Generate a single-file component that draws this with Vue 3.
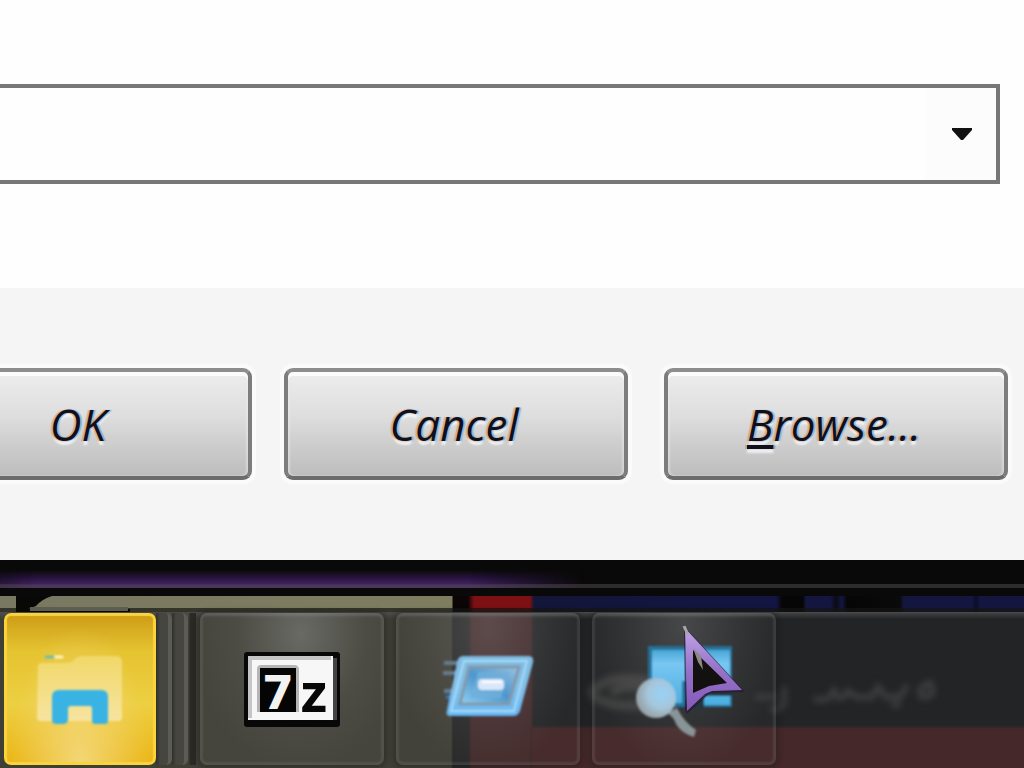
<template>
  <main class="screen">
    <section class="run-dialog">
      <div class="run-dialog__body">
        <div class="run-dialog__combo">
          <select v-model="command" class="run-dialog__select" aria-label="Open">
            <option value=""></option>
          </select>
          <svg class="run-dialog__arrow" viewBox="0 0 20 12" aria-hidden="true">
            <path d="M0 0H20V2L11 12H9L0 2Z" fill="#111" />
          </svg>
        </div>
      </div>

      <footer class="run-dialog__footer">
        <button
          v-for="action in actions"
          :key="action.key"
          class="run-dialog__button"
          type="button"
        >
          <span class="run-dialog__caption"><u v-if="action.accessKey">{{ action.accessKey }}</u>{{ action.label }}</span>
        </button>
      </footer>
    </section>

    <div class="desktop-edge">
      <div class="desktop-edge__glow"></div>
    </div>
    <div class="desktop-strip">
      <svg class="desktop-strip__notch" viewBox="0 0 116 16" aria-hidden="true">
        <path d="M0 0H36Q26 3 20 10L12 13H114V16H0Z" fill="#080807" />
        <path d="M14 11H112V15H14Z" fill="#5f5d50" />
      </svg>
    </div>

    <nav class="taskbar" aria-label="Taskbar">
      <!-- 任务栏玻璃后面透出来的模糊文字，只是装饰 -->
      <svg class="taskbar__ghost" viewBox="0 0 370 70" aria-hidden="true">
        <g fill="none" stroke="#65655f" stroke-width="6" stroke-linecap="round">
          <path d="M16 36Q34 18 72 26M18 42Q42 56 78 48M38 36Q54 28 70 34" stroke-width="9" opacity="0.4" />
          <path d="M182 42H198M208 34V48Q204 56 196 54" opacity="0.35" />
          <path d="M240 44Q252 48 258 36Q264 50 272 36L280 42H296L302 32L310 42H324L330 32M318 50H322M346 42Q340 32 354 28Q362 42 346 42" opacity="0.4" />
        </g>
      </svg>

      <button class="task task--explorer" type="button" aria-label="File Explorer">
        <svg class="task__icon task__icon--folder" viewBox="0 0 152 152" aria-hidden="true">
          <defs>
            <linearGradient id="folder-fill" x1="0" y1="0" x2="0" y2="1">
              <stop offset="0" stop-color="#f1d869" />
              <stop offset="1" stop-color="#f7e4a0" />
            </linearGradient>
          </defs>
          <path d="M34 54Q34 50 38 50H62Q68 50 71 46Q74 43 78 43H112Q118 43 118 49V104Q118 108 114 108H37Q33 108 33 104Z" fill="url(#folder-fill)" />
          <path d="M42 44H58" stroke="#fff4bd" stroke-width="3" stroke-linecap="round" />
          <path d="M42 44H49" stroke="#70b69a" stroke-width="3" stroke-linecap="round" />
          <path d="M48 84Q48 77 55 77H97Q104 77 104 84V108Q104 111 101 111H91Q88 111 88 108V95Q88 93 86 93H67Q64 93 64 96V106Q64 111 59 111H52Q48 111 48 107Z" fill="#38b3e4" />
        </svg>
      </button>

      <div class="task-stack" aria-hidden="true">
        <span class="task-stack__edge"></span>
        <span class="task-stack__edge"></span>
      </div>

      <button class="task task--glass task--lit" type="button" aria-label="7-Zip">
        <svg class="task__icon" viewBox="0 0 184 152" aria-hidden="true">
          <rect x="44" y="39" width="96" height="75" rx="3" fill="#080808" />
          <rect x="48" y="43" width="85" height="64" fill="#f7f7f7" />
          <path d="M50 105V45H131" fill="none" stroke="#c5c5c5" stroke-width="4" />
          <path d="M133 45H137V107H133Z" fill="#444" />
          <path d="M57 99V56Q57 52 61 52H94Q99 52 99 57V99Z" fill="#b5b5b5" />
          <rect x="60" y="55" width="36" height="44" fill="#050505" />
          <text x="78" y="96" class="task__seven">7</text>
          <text x="114" y="99" class="task__zed">z</text>
        </svg>
      </button>

      <button class="task task--glass" type="button" aria-label="Run">
        <svg class="task__icon" viewBox="0 0 184 152" aria-hidden="true">
          <defs>
            <linearGradient id="run-outer" x1="0" y1="0" x2="0" y2="1">
              <stop offset="0" stop-color="#7fbbe2" />
              <stop offset="0.5" stop-color="#82bfe8" />
              <stop offset="1" stop-color="#67b8f7" />
            </linearGradient>
            <linearGradient id="run-inner" x1="0" y1="1" x2="1" y2="0">
              <stop offset="0" stop-color="#91d1f2" />
              <stop offset="0.5" stop-color="#4c96cd" />
              <stop offset="1" stop-color="#9bc3e3" />
            </linearGradient>
            <filter id="run-soft"><feGaussianBlur stdDeviation="1" /></filter>
          </defs>
          <g filter="url(#run-soft)">
            <path d="M48 50H64M47 60H61M48 78H58" stroke="#657a8e" stroke-width="4" />
            <path d="M50 84H60" stroke="#3273b1" stroke-width="4" />
            <path d="M67 43H132Q138 43 137 49L124 98Q122 103 117 103H55Q49 103 51 97L61 50Q62 43 67 43Z" fill="url(#run-outer)" />
            <path d="M68 48H131L118 98H55Z" fill="none" stroke="#a9dbf5" stroke-width="2" />
            <path d="M73 54H123L113 91H64Z" fill="url(#run-inner)" stroke="#839aa8" stroke-width="3" />
            <path d="M82 59H113L105 85H74Z" fill="#70afdb" opacity="0.8" />
            <rect x="82" y="66" width="26" height="11" rx="4" fill="#d9e7fa" />
            <path d="M86 69H106" stroke="#fff" stroke-width="2" />
          </g>
        </svg>
      </button>

      <button class="task task--glass" type="button" aria-label="Search programs">
        <svg class="task__icon" viewBox="0 0 184 152" aria-hidden="true">
          <defs>
            <linearGradient id="screen-fill" x1="0" y1="0" x2="0" y2="1">
              <stop offset="0" stop-color="#49a6d5" />
              <stop offset="0.25" stop-color="#79c7f2" />
              <stop offset="1" stop-color="#4aaee0" />
            </linearGradient>
            <radialGradient id="lens-fill" cx="0.65" cy="0.4" r="0.7">
              <stop offset="0" stop-color="#98d2f8" />
              <stop offset="0.5" stop-color="#a6c6db" />
              <stop offset="1" stop-color="#929a9c" />
            </radialGradient>
            <filter id="lens-soft"><feGaussianBlur stdDeviation="1" /></filter>
          </defs>
          <g filter="url(#lens-soft)">
            <path d="M56 33H140V94H56Z" fill="#286f98" />
            <path d="M60 37H138V68H60ZM60 68H90V90H60ZM112 83H138V92H112Z" fill="url(#screen-fill)" />
            <path d="M98 76H142V83H112V96H92Z" fill="#28363c" />
            <path d="M75 100L85 95Q92 109 104 117L102 124Q89 120 84 111Q82 104 75 100Z" fill="#889497" />
            <circle cx="64" cy="85" r="20" fill="url(#lens-fill)" />
          </g>
        </svg>
      </button>
    </nav>

    <svg class="pointer" viewBox="0 0 64 88" aria-hidden="true">
      <defs>
        <linearGradient id="pointer-fill" x1="0" y1="0" x2="0" y2="1">
          <stop offset="0" stop-color="#c2a5e8" />
          <stop offset="0.5" stop-color="#9773c9" />
          <stop offset="1" stop-color="#8459b7" />
        </linearGradient>
      </defs>
      <path d="M3 0L64 66L29 67L6 88L4 84Z" fill="#241b33" opacity="0.7" />
      <path d="M4 2L61 64L31 65L24 68L6 85Z" fill="url(#pointer-fill)" />
      <path d="M12 24L46 57L28 60L12 67Z" fill="#121110" />
      <path d="M12 22L20 30L22 44L17 36Z" fill="#8d8988" />
      <path d="M3 0L7 9" stroke="#aaa5ad" stroke-width="3" />
    </svg>
  </main>
</template>

<script setup>
  import { ref } from 'vue'

  const command = ref('')

  // accessKey: 需要加下划线显示的快捷字母，没有就直接显示完整文案。
  const actions = [
    { key: 'ok', label: 'OK' },
    { key: 'cancel', label: 'Cancel' },
    { key: 'browse', label: 'rowse...', accessKey: 'B' }
  ]
</script>

<style>
  body {
    margin: 0;
    background: #0a0909;
  }
</style>

<style scoped>
  .screen {
    position: relative;
    overflow: hidden;
    font-family: 'Open Sans', 'Noto Sans', sans-serif;
  }

  .run-dialog__body {
    padding: 84px 24px 104px 0;
    background: #fefefe;
  }

  .run-dialog__combo {
    position: relative;
  }

  .run-dialog__select {
    display: block;
    box-sizing: border-box;
    width: 100%;
    height: 100px;
    border: 4px solid #777;
    border-left: 0;
    border-radius: 0;
    background: linear-gradient(90deg, #fefefe calc(100% - 72px), #fcfcfc calc(100% - 68px));
    appearance: none;
    font: inherit;
    font-size: 44px;
    outline: none;
  }

  .run-dialog__arrow {
    position: absolute;
    top: 44px;
    right: 28px;
    width: 20px;
    height: 12px;
    pointer-events: none;
  }

  .run-dialog__footer {
    display: flex;
    justify-content: flex-end;
    padding: 80px 16px;
    background: #f5f5f5;
  }

  .run-dialog__button {
    flex: 0 0 344px;
    box-sizing: border-box;
    height: 112px;
    margin-left: 32px;
    padding: 0 4px 0 0;
    border: 4px solid;
    border-color: #8d8d8d #7d7d7d #6c6c6c;
    border-radius: 9px;
    background: linear-gradient(180deg, #ededed, #dedede 42%, #cdcdcd 70%, #bdbdbd);
    box-shadow: inset 0 4px 0 #fbfbfb, inset 2px 0 2px #eeeeee80, inset -2px 0 2px #eeeeee80, 0 0 2px 4px #fbfbfb;
    color: #10101c;
    font: inherit;
    font-size: 44px;
    font-style: italic;
    font-weight: 500;
    line-height: 56px;
  }

  .run-dialog__button:last-child {
    margin-left: 36px;
  }

  .run-dialog__caption {
    text-shadow: -2px 0 1px #d5903a99, 2px 0 1px #3a90d080, 0 4px 2px #ffffffb0;
  }

  .run-dialog__caption u {
    text-decoration-thickness: 4px;
    text-underline-offset: 4px;
    text-decoration-skip-ink: none;
  }

  .desktop-edge {
    height: 36px;
    padding-top: 10px;
    box-sizing: border-box;
    background: #0a0909;
  }

  .desktop-edge__glow {
    height: 18px;
    box-sizing: border-box;
    border-bottom: 4px solid #2d2b2d;
    background: #0a0909;
    position: relative;
  }

  .desktop-edge__glow::after {
    content: '';
    position: absolute;
    inset: 0 auto -4px 0;
    width: 57%;
    background: linear-gradient(180deg, #0a0909, #2c1547 50%, #3d2259 75%, #4b3859 86%, #4b3859);
    mask-image: linear-gradient(90deg, #0009, #000 6%, #000 80%, transparent);
  }

  .desktop-strip {
    height: 16px;
    padding-left: 16px;
    background:
      linear-gradient(180deg, transparent 12px, #141411b0 12px),
      linear-gradient(90deg, #797861 16px, #7f7d60 452px, #0b0505 453px, #0b0505 468px, #7d1013 474px, #7d1013 530px, #131638 534px, #131642 776px, #060607 782px, #060607 803px, #151640 806px, #151640 830px, #0b0b16 836px, #141642 842px, #060607 847px, #0a0a0a 900px, #14163f 904px, #14163f 972px, #0c0d26 976px, #14163f 980px);
  }

  .desktop-strip__notch {
    display: block;
    width: 116px;
    height: 16px;
  }

  .taskbar {
    position: relative;
    display: flex;
    align-items: flex-start;
    height: 156px;
    padding-left: 4px;
    box-sizing: border-box;
    border-top: 1px solid #4a4a4b;
    background:
      linear-gradient(180deg, #55555599, transparent 6px),
      linear-gradient(180deg, transparent 112px, #452829 116px) 532px 0 no-repeat,
      linear-gradient(90deg, #3f3f36 451px, #252625 453px, #252625 468px, #43292a 472px, #43292a 530px, #232426 534px);
  }

  .taskbar__ghost {
    position: absolute;
    top: 42px;
    left: 576px;
    width: 370px;
    height: 70px;
    filter: blur(3px);
  }

  .task {
    position: relative;
    flex: none;
    box-sizing: border-box;
    height: 152px;
    padding: 0;
    border: 0;
    border-radius: 7px;
  }

  .task--explorer {
    width: 152px;
    background:
      radial-gradient(ellipse at 50% 100%, #f3d777, transparent 65%),
      linear-gradient(180deg, #cc9b15, #e5c331 25%, #edcf42 60%, #ebb516);
    box-shadow: inset 0 0 1px 3px #fad43c;
  }

  .task-stack {
    display: flex;
    width: 40px;
    height: 152px;
    margin-right: 4px;
    background: linear-gradient(90deg, transparent 33px, #292a25 34px);
  }

  .task-stack__edge {
    width: 16px;
    box-sizing: border-box;
    border-right: 4px solid #5c5c55;
    border-radius: 0 6px 6px 0;
    background: linear-gradient(90deg, #2f302a, #45463f 4px, #45463f);
  }

  .task--glass {
    width: 184px;
    margin-right: 12px;
    background: radial-gradient(ellipse at 50% 8%, #9999994d, #88888824 48%, #7777770d 75%);
    box-shadow: inset 0 0 2px 3px #aaaaaa26, 0 0 4px 3px #1616164d;
  }

  .task--lit {
    background: radial-gradient(ellipse at 55% 14%, #aaaaaa66, #8888882e 45%, #7777771a 75%);
  }

  .task__icon {
    display: block;
    width: 100%;
    height: 152px;
  }

  .task__icon--folder {
    filter: blur(1px);
  }

  .task__seven,
  .task__zed {
    font-family: 'DejaVu Sans', sans-serif;
    font-weight: 700;
    text-anchor: middle;
  }

  .task__seven {
    fill: #f2f2f2;
    font-size: 46px;
  }

  .task__zed {
    fill: #080808;
    font-family: 'Open Sans', sans-serif;
    font-size: 54px;
  }

  .pointer {
    position: absolute;
    bottom: 54px;
    left: 681px;
    width: 64px;
    height: 88px;
  }
</style>
